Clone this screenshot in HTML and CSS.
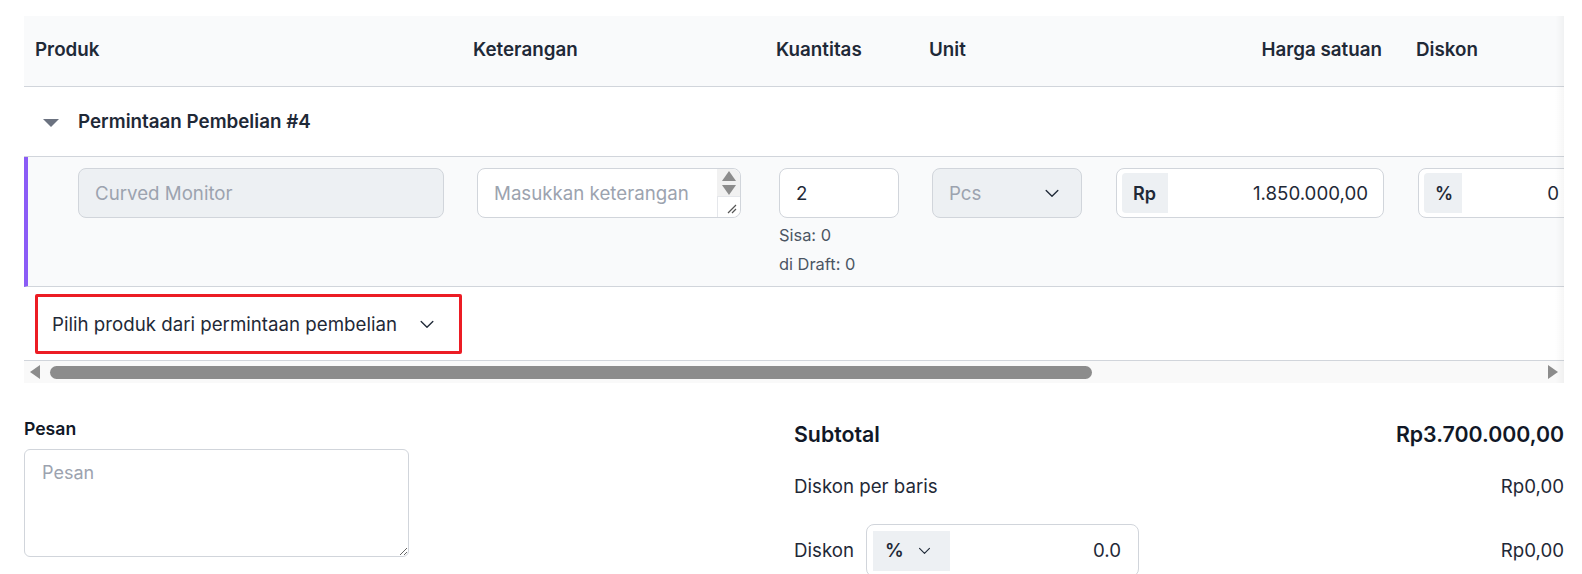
FILE: index.html
```html
<!DOCTYPE html>
<html lang="id">
<head>
    <meta charset="UTF-8" />
    <meta name="viewport" content="width=device-width, initial-scale=1.0" />
    <title>Pesanan Pembelian</title>
    <link rel="stylesheet" href="styles.css">
</head>
<body>
    <div class="page">
        <!-- Item table (scrolls horizontally) -->
        <div class="table-wrap">
            <div class="table">
                <div class="row head">
                    <div class="th">Produk</div>
                    <div class="th">Keterangan</div>
                    <div class="th">Kuantitas</div>
                    <div class="th">Unit</div>
                    <div class="th right">Harga satuan</div>
                    <div class="th">Diskon</div>
                </div>

                <div class="group-row">
                    <span class="caret"></span>
                    <span class="group-title">Permintaan Pembelian #4</span>
                </div>

                <div class="row item">
                    <div class="td td-product">
                        <input class="field disabled product" type="text" placeholder="Curved Monitor" disabled />
                    </div>
                    <div class="td">
                        <div class="note-box">
                            <span class="placeholder">Masukkan keterangan</span>
                            <div class="note-scroll">
                                <span class="arr up"></span>
                                <span class="arr down"></span>
                                <span class="grip">
                                    <svg width="12" height="12" viewBox="0 0 12 12"><path d="M11 3 L3 11 M11 7 L7 11" /></svg>
                                </span>
                            </div>
                        </div>
                    </div>
                    <div class="td">
                        <input class="field qty" type="text" value="2" />
                        <div class="hint">Sisa: 0</div>
                        <div class="hint">di Draft: 0</div>
                    </div>
                    <div class="td">
                        <div class="field select disabled">
                            <span class="placeholder">Pcs</span>
                            <svg class="chev" width="20" height="20" viewBox="0 0 24 24"><polyline points="5 9 12 16 19 9" /></svg>
                        </div>
                    </div>
                    <div class="td">
                        <div class="field addon-field price">
                            <span class="addon">Rp</span>
                            <span class="value">1.850.000,00</span>
                        </div>
                    </div>
                    <div class="td">
                        <div class="field addon-field disc-cell">
                            <span class="addon small">%</span>
                            <span class="value">0</span>
                        </div>
                    </div>
                </div>

                <div class="pick-row">
                    <div class="pick-box">
                        <span>Pilih produk dari permintaan pembelian</span>
                        <svg class="chev" width="20" height="20" viewBox="0 0 24 24"><polyline points="5 9 12 16 19 9" /></svg>
                    </div>
                </div>
            </div>
            <div class="edge-shade"></div>

            <!-- horizontal scrollbar -->
            <div class="hscroll">
                <span class="sb-arrow left"></span>
                <span class="sb-thumb"></span>
                <span class="sb-arrow right"></span>
            </div>
        </div>

        <!-- Note & totals -->
        <div class="bottom">
            <div class="message">
                <label class="label" for="pesan">Pesan</label>
                <textarea id="pesan" placeholder="Pesan"></textarea>
            </div>
            <div class="totals">
                <div class="total-line subtotal">
                    <span>Subtotal</span>
                    <span>Rp3.700.000,00</span>
                </div>
                <div class="total-line line-disc">
                    <span>Diskon per baris</span>
                    <span>Rp0,00</span>
                </div>
                <div class="total-line line-extra">
                    <div class="discount">
                        <span>Diskon</span>
                        <div class="field addon-field disc-field">
                            <span class="addon disc-type">%
                                <svg class="chev" width="17" height="17" viewBox="0 0 24 24"><polyline points="5 9 12 16 19 9" /></svg>
                            </span>
                            <span class="value">0.0</span>
                        </div>
                    </div>
                    <span>Rp0,00</span>
                </div>
            </div>
        </div>
    </div>
</body>
</html>
```

FILE: styles.css
```css
/* === Reset & Font === */
html, body, div, span, label {
    margin: 0;
    padding: 0;
}

* {
    box-sizing: border-box;
}

html, body {
    height: 574px;
    overflow: hidden;
}

body {
    font-family: Inter, "Noto Sans", sans-serif;
    background: #fff;
    color: #1f2937;
}

.page {
    width: 1582px;
    height: 574px;
    overflow: hidden;
    padding: 16px 18px 0 24px;
}

/* === Item Table === */
.table-wrap {
    position: relative;
    width: 1540px;
    overflow: hidden;
}

.table {
    width: 1720px;
}

.row {
    display: grid;
    grid-template-columns: 437px 303px 153px 183px 303px 341px;
}

.head {
    height: 71px;
    background: #f9fafb;
    border-bottom: 1px solid #d1d5db;
    align-items: center;
}

    .head .th {
        font-size: 18.8px;
        font-weight: 600;
        padding-left: 12px;
        padding-bottom: 3px;
    }

        .head .th:first-child {
            padding-left: 11px;
        }

        .head .th.right {
            text-align: right;
            padding-right: 21px;
        }

        .head .th:nth-child(6) {
            padding-left: 13px;
        }

.group-row {
    height: 70px;
    border-bottom: 1px solid #d1d5db;
    display: flex;
    align-items: center;
    padding-left: 19px;
    width: 1540px;
}

.caret {
    width: 0;
    height: 0;
    border-left: 8px solid transparent;
    border-right: 8px solid transparent;
    border-top: 8px solid #6b7280;
    margin-right: 19px;
    margin-top: 2px;
}

.group-title {
    font-size: 18.8px;
    font-weight: 600;
}

.item {
    height: 130px;
    background: #f9fafb;
    border-left: 4px solid #8b5cf6;
    border-bottom: 1px solid #d1d5db;
    grid-template-columns: 433px 303px 153px 183px 303px 341px;
}

    .item .td {
        padding: 11px 0 0 15px;
    }

        .item .td:nth-child(2), .item .td:nth-child(5) {
            padding-left: 16px;
        }

    .item .td-product {
        padding-left: 50px;
    }

.field {
    height: 50px;
    border: 1px solid #d1d5db;
    border-radius: 8px;
    background: #fff;
    font-family: inherit;
    font-size: 18.7px;
    color: #1f2937;
    padding: 0 16px;
    display: flex;
    align-items: center;
}

    .field::placeholder {
        color: #9ca3af;
    }

    .field.disabled {
        background: #edf0f3;
    }

.product {
    width: 366px;
}

.placeholder {
    color: #9ca3af;
    font-size: 18.7px;
}

.qty {
    width: 120px;
}

.hint {
    font-size: 16.4px;
    color: #4b5563;
    line-height: 29px;
}

    .hint:first-of-type {
        margin-top: 3px;
    }

.select {
    width: 150px;
    justify-content: space-between;
    padding-right: 19px;
}

.chev {
    fill: none;
    stroke: #1f2937;
    stroke-width: 1.6;
    stroke-linecap: round;
    stroke-linejoin: round;
}

.addon-field {
    padding: 4px 15px 4px 5px;
    justify-content: space-between;
}

.price {
    width: 268px;
}

.disc-cell {
    width: 157px;
}

.addon {
    background: #edf0f3;
    height: 40px;
    width: 46px;
    border-radius: 4px 0 0 4px;
    font-weight: 600;
    font-size: 18px;
    display: flex;
    align-items: center;
    padding-left: 11px;
}

    .addon.small {
        width: 38px;
        padding-left: 11px;
    }

.value {
    font-size: 18.7px;
}

/* Keterangan textarea look */
.note-box {
    position: relative;
    height: 50px;
    width: 264px;
    border: 1px solid #d1d5db;
    border-radius: 8px;
    background: #fff;
    padding: 0 16px;
    display: flex;
    align-items: center;
}

.note-scroll {
    position: absolute;
    top: 0;
    right: 0;
    width: 23px;
    height: 48px;
    background: #f1f1f1;
    border-radius: 0 8px 8px 0;
}

.arr {
    position: absolute;
    left: 5px;
    width: 0;
    height: 0;
    border-left: 7px solid transparent;
    border-right: 7px solid transparent;
}

    .arr.up {
        top: 2px;
        border-bottom: 10px solid #8c8c8c;
    }

    .arr.down {
        top: 16px;
        border-top: 10px solid #8c8c8c;
    }

.grip {
    position: absolute;
    right: 0;
    bottom: 0;
    width: 23px;
    height: 21px;
    background: #fff;
    border-left: 1px solid #e5e7eb;
    border-top: 1px solid #e5e7eb;
    border-radius: 0 0 8px 0;
    display: flex;
    align-items: flex-end;
    justify-content: flex-end;
    padding: 0 3px 3px 0;
}

    .grip path {
        stroke: #555;
        stroke-width: 1.2;
        fill: none;
    }

/* Pick product */
.pick-row {
    height: 74px;
    border-bottom: 1px solid #d1d5db;
    padding: 7px 0 0 11px;
    width: 1540px;
}

.pick-box {
    width: 427px;
    height: 60px;
    border: 3px solid #ec1c24;
    border-radius: 2px;
    display: flex;
    align-items: center;
    padding-left: 14px;
    font-size: 18.7px;
    gap: 20px;
}

.edge-shade {
    position: absolute;
    top: 0;
    right: 0;
    width: 9px;
    height: 100%;
    background: linear-gradient(to right, rgba(0, 0, 0, 0), rgba(0, 0, 0, 0.035));
}

/* === Scrollbar === */
.hscroll {
    height: 22px;
    background: #f9f9f9;
    display: flex;
    align-items: center;
    padding: 0 6px 0 6px;
}

.sb-thumb {
    width: 1042px;
    height: 13px;
    border-radius: 7px;
    background: #8c8c8c;
    margin-left: 10px;
}

.sb-arrow {
    width: 0;
    height: 0;
    border-top: 7px solid transparent;
    border-bottom: 7px solid transparent;
}

    .sb-arrow.left {
        border-right: 10px solid #8c8c8c;
    }

    .sb-arrow.right {
        border-left: 10px solid #8c8c8c;
        margin-left: auto;
    }

/* === Bottom: message & totals === */
.bottom {
    display: flex;
    justify-content: space-between;
    padding-top: 35px;
}

.message {
    width: 385px;
}

.label {
    display: block;
    font-size: 17.6px;
    line-height: 22px;
    font-weight: 600;
    color: #111827;
    margin-bottom: 9px;
}

textarea {
    display: block;
    width: 385px;
    height: 108px;
    border: 1px solid #d1d5db;
    border-radius: 6px;
    padding: 12px 17px;
    font-family: inherit;
    font-size: 18px;
    resize: vertical;
}

    textarea::placeholder {
        color: #9ca3af;
    }

.totals {
    width: 770px;
}

.total-line {
    display: flex;
    justify-content: space-between;
    align-items: center;
    font-size: 18.7px;
}

    .total-line.subtotal {
        font-size: 21.3px;
        font-weight: 600;
        color: #111827;
        height: 32px;
    }

    .total-line.line-disc {
        height: 72px;
    }

    .total-line.line-extra {
        margin-top: 2px;
        height: 53px;
    }

.discount {
    display: flex;
    align-items: center;
    gap: 12px;
}

.disc-field {
    width: 273px;
    height: 53px;
    padding: 6px 17px 6px 6px;
}

.disc-type {
    width: 77px;
    height: 40px;
    font-size: 18.7px;
    gap: 12px;
    padding-left: 12px;
    border-radius: 0;
}
```
